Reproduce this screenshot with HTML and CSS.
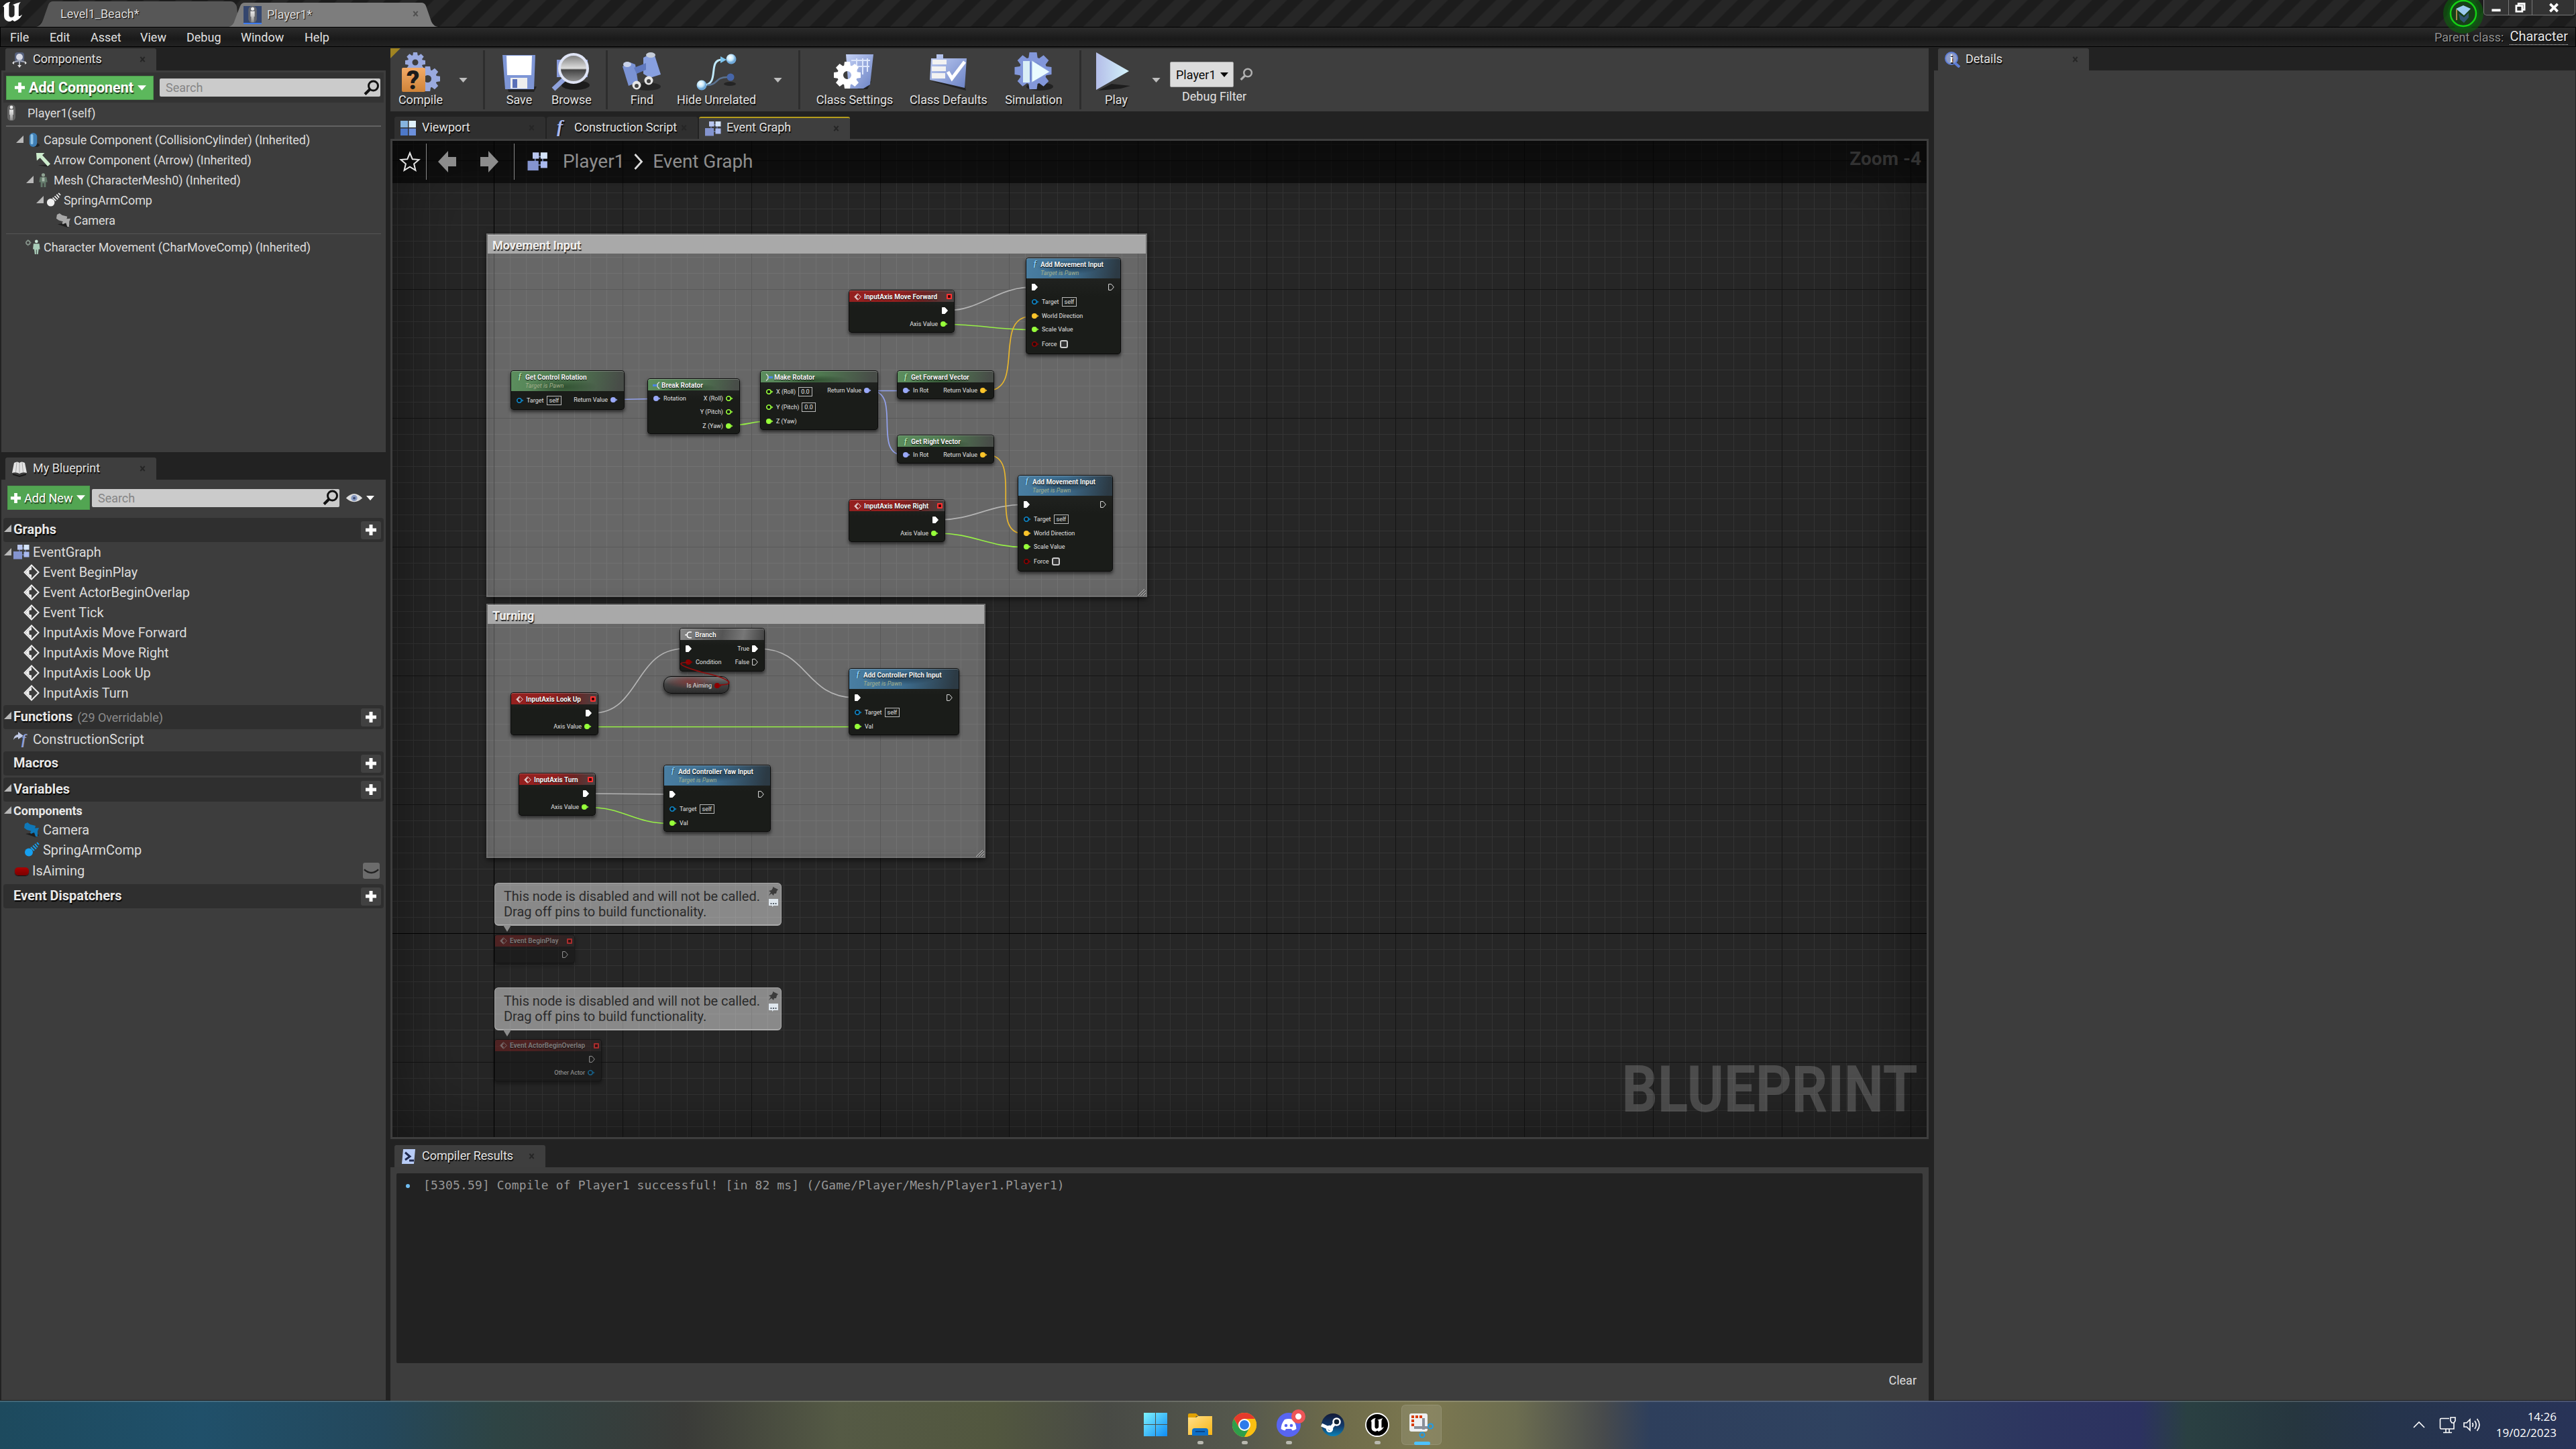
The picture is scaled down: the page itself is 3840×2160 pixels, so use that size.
FILE: index.html
```html
<!DOCTYPE html>
<html lang="en">
<head>
<meta charset="utf-8">
<title>Player1 - Blueprint Editor</title>
<link rel="stylesheet" href="styles.css">
</head>
<body>
<svg class="defs" width="0" height="0" aria-hidden="true">
  <defs>
    <linearGradient id="gBlue" x1="0" y1="0" x2="1" y2="1"><stop offset="0" stop-color="#c3d0f5"/><stop offset="1" stop-color="#6b82c4"/></linearGradient>
    <linearGradient id="gPlay" x1="0" y1="0" x2="1" y2="0"><stop offset="0" stop-color="#b4bde8"/><stop offset="1" stop-color="#d3f3fb"/></linearGradient>
    <linearGradient id="gOrange" x1="0" y1="0" x2="0" y2="1"><stop offset="0" stop-color="#f3ab68"/><stop offset="1" stop-color="#cf8338"/></linearGradient>
    <linearGradient id="gGlass" x1="0" y1="0" x2="0" y2="1"><stop offset="0" stop-color="#777"/><stop offset=".5" stop-color="#ddd"/><stop offset=".55" stop-color="#444"/><stop offset="1" stop-color="#999"/></linearGradient>
    <linearGradient id="gWin" x1="0" y1="0" x2="1" y2="1"><stop offset="0" stop-color="#7df3ff"/><stop offset="1" stop-color="#0f8cf5"/></linearGradient>
    <linearGradient id="gFold" x1="0" y1="0" x2="1" y2="1"><stop offset="0" stop-color="#ffe08a"/><stop offset="1" stop-color="#f9b516"/></linearGradient>
    <linearGradient id="gSteam" x1="0" y1="0" x2="0" y2="1"><stop offset="0" stop-color="#131a38"/><stop offset=".55" stop-color="#123a6b"/><stop offset="1" stop-color="#0a83b8"/></linearGradient>
    <radialGradient id="gOrb" cx=".4" cy=".35"><stop offset="0" stop-color="#fff"/><stop offset=".6" stop-color="#c8eafb"/><stop offset="1" stop-color="#6fa8d8"/></radialGradient>
    <linearGradient id="gMan" x1="0" y1="0" x2="0" y2="1"><stop offset="0" stop-color="#e8e8e8"/><stop offset=".5" stop-color="#c2c2c2"/><stop offset="1" stop-color="#8d8d8d"/></linearGradient>
  </defs>
  <symbol id="ue" viewBox="0 0 28 28"><path d="M0 7C4 1 8 0 11 0c-2 2-2 4-2 7v11c0 3 2 4 4 4s4-2 4-4V7c0-2-1-3-3-3 3-1 8-3 12-4-2 2-3 4-3 7v12c0 2 1 2 5-1-2 5-6 8-11 10l-3-2c-1 1-3 2-4 2-4 0-8-3-8-8V9c0-3-1-3-2-2z" fill="#fff"/></symbol>
  <symbol id="x" viewBox="0 0 10 10"><path d="M1.500 1L8.500 9M8.500 1L1.500 9" stroke="#262626" stroke-width="2.400"/></symbol>
  <symbol id="tri" viewBox="0 0 12 12"><path d="M12 0V12H0z" fill="#b8b8b8"/></symbol>
  <symbol id="down" viewBox="0 0 14 8"><path d="M0 0H14L7 8z" fill="currentColor"/></symbol>
  <symbol id="plus" viewBox="0 0 18 18"><path d="M6.500 1h5v5.500H17v5h-5.500V17h-5v-5.500H1v-5h5.500z" fill="#fff"/></symbol>
  <symbol id="mag" viewBox="0 0 24 24"><circle cx="14.500" cy="9" r="7" fill="none" stroke="currentColor" stroke-width="3"/><path d="M9.500 14L2 21.500" stroke="currentColor" stroke-width="4"/></symbol>
  <symbol id="man" viewBox="0 0 24 24"><rect x="6" y="0" width="12" height="24" rx="5.500" fill="#6c6c6c" opacity=".85"/><circle cx="12" cy="4" r="2.400" fill="#eee"/><path d="M9 7.500h6V15h-1v8h-4v-8H9z" fill="url(#gMan)"/></symbol>
  <symbol id="i-comp" viewBox="0 0 24 24"><rect x="5" y="1" width="14" height="15" rx="4" fill="#56617d"/><circle cx="12" cy="8" r="5" fill="#d7d9e4"/><path d="M12 13v9M3 16l9-3 9 3" stroke="#aeb2bd" stroke-width="1.800" fill="none"/><path d="M12 24l-3-4h6zM1 17l3-3v5zM23 17l-3-3v5z" fill="#e2e2e2"/></symbol>
  <symbol id="i-capsule" viewBox="0 0 24 24"><ellipse cx="16" cy="20" rx="6" ry="3" fill="#222"/><rect x="6" y="1" width="12" height="22" rx="6" fill="#3f7fb5"/><rect x="8" y="3" width="4" height="16" rx="2" fill="#8fc4e8"/></symbol>
  <symbol id="i-arrow" viewBox="0 0 24 24"><path d="M4 20l16 3 2-4z" fill="#222"/><path d="M1 1h13l-3.500 3.500L23 18l-4 4L7 8.500 2 13z" fill="#cdeccd"/></symbol>
  <symbol id="i-mesh" viewBox="0 0 24 24"><circle cx="12" cy="4" r="2.700" fill="#8fa393"/><path d="M7 7h10l1.500 8H16v8h-3v-6h-2v6H8v-8H5.500z" fill="#63796a"/><path d="M10 8h4v6h-4z" fill="#a5b8a8"/></symbol>
  <symbol id="i-spring" viewBox="0 0 24 24"><circle cx="8" cy="15.500" r="6" fill="currentColor"/><path d="M11 8l5 5M14 5.500l5 5M17 3l4 5M20 1l3 3" stroke="currentColor" stroke-width="1.900"/></symbol>
  <symbol id="i-camera" viewBox="0 0 24 24"><path d="M3 18l15 5 5-3-8-4z" fill="#1d1d1d"/><path d="M2 3l4-2 4 3 8 2-2 9-11-3-4-3z" fill="currentColor"/><path d="M14 10l9-1-2 5 0 8h-3l-2-6-5 2-1-2z" fill="currentColor"/></symbol>
  <symbol id="i-move" viewBox="0 0 24 24"><circle cx="4" cy="5" r="3" fill="none" stroke="#87958c" stroke-width="1.800"/><path d="M4 0v2M4 8v2M-1 5h2M7 5h2" stroke="#87958c"/><circle cx="17" cy="3" r="2.500" fill="#c9e6d7"/><path d="M12.500 6.500h9L22.500 15h-2l-1 8h-2v-7h-1v7h-2l-1-8h-2z" fill="#a9cdb9"/></symbol>
  <symbol id="i-book" viewBox="0 0 24 24"><path d="M2 19l10 3 10-3v2l-10 3-10-3z" fill="#181818"/><path d="M4 3q5-3 8 0 3-3 8 0l3 15q-6-2-11 1-5-3-11-1z" fill="#e4e4e4"/><path d="M12 3v15M8 2.500L6.500 17M16 2.500L17.500 17" stroke="#a9a9a9"/></symbol>
  <symbol id="i-graph" viewBox="0 0 24 24"><path d="M11 6h6M18 8v8M10 16h8M9 8v8" stroke="#6577a8" stroke-width="1.500"/><rect x="6" y="1" width="7.500" height="7.500" fill="#b9c6ef"/><rect x="15.500" y="1" width="8" height="7.500" fill="#d5e4fa"/><rect x="0" y="11" width="13" height="11.500" fill="#8494cf"/><rect x="15.500" y="11.500" width="8" height="8" fill="#a9b9ee"/></symbol>
  <symbol id="i-event" viewBox="0 0 24 24"><path d="M12 1.500L22.500 12 12 22.500 1.500 12z" fill="none" stroke="currentColor" stroke-width="2"/><path d="M12 3v5.500L8.500 9v6l3.500.5V21L3 12z" fill="currentColor"/></symbol>
  <symbol id="i-script" viewBox="0 0 24 24"><path d="M0 13C1 6 5 5 7 5V1l8 6-8 5V9C4 9 2 10 0 13z" fill="#c0c9e4"/><text x="12" y="19" font-family="Liberation Serif, serif" font-style="italic" font-weight="bold" font-size="21" fill="#8fa0d8">f</text></symbol>
  <symbol id="i-func" viewBox="0 0 24 24"><text x="6" y="19" font-family="Liberation Serif, serif" font-style="italic" font-weight="bold" font-size="27" fill="currentColor">f</text></symbol>
  <symbol id="i-view" viewBox="0 0 24 24"><path d="M0 1h11v10H0z" fill="#86b4de"/><path d="M12.500 1H23v10H12.500z" fill="#dff1fb"/><path d="M0 12.500h11V23H0z" fill="#4d78c9"/><path d="M12.500 12.500H23V23H12.500z" fill="#6c90dc"/></symbol>
  <symbol id="i-eye" viewBox="0 0 26 16"><path d="M0 8Q13-6 26 8 13 20 0 8z" fill="#ddd"/><circle cx="13" cy="8" r="5" fill="#8799c0"/><circle cx="13" cy="8" r="2" fill="#3d4a6e"/></symbol>
  <symbol id="i-info" viewBox="0 0 24 24"><path d="M14 15l9 8" stroke="#5f7ed6" stroke-width="4"/><circle cx="11" cy="10" r="9" fill="#8d9bc4" stroke="#5f7ed6" stroke-width="2"/><text x="8.500" y="16" font-family="Liberation Serif, serif" font-weight="bold" font-size="17" fill="#fff">i</text></symbol>
  <symbol id="i-log" viewBox="0 0 24 24"><path d="M4 1h18l-2 22H2z" fill="#b9cdf7"/><path d="M7 6l7 6-7 5" fill="none" stroke="#202a4e" stroke-width="3"/><path d="M13 18h7" stroke="#202a4e" stroke-width="3"/></symbol>
  <symbol id="gear" viewBox="0 0 40 40"><g><path d="M16 0h8l1 7H15z"/><path d="M16 0h8l1 7H15z" transform="rotate(45 20 20)"/><path d="M16 0h8l1 7H15z" transform="rotate(90 20 20)"/><path d="M16 0h8l1 7H15z" transform="rotate(135 20 20)"/><path d="M16 0h8l1 7H15z" transform="rotate(180 20 20)"/><path d="M16 0h8l1 7H15z" transform="rotate(225 20 20)"/><path d="M16 0h8l1 7H15z" transform="rotate(270 20 20)"/><path d="M16 0h8l1 7H15z" transform="rotate(315 20 20)"/></g><circle cx="20" cy="20" r="10.500" fill="none" stroke="currentColor" stroke-width="9"/></symbol>
  <symbol id="exec" viewBox="0 0 9 10"><path d="M.5.500h4L8.500 5l-4 4.500h-4z" fill="#fff" stroke="#fff"/></symbol>
  <symbol id="exec-o" viewBox="0 0 9 10"><path d="M.600.600h4L8.300 5 4.600 9.400h-4z" fill="none" stroke="#e0e0e0" stroke-width="1"/></symbol>
  <symbol id="pin" viewBox="0 0 11 8"><circle cx="4" cy="4" r="4" fill="currentColor"/><path d="M8.200 2.200L10.500 4 8.200 5.800z" fill="currentColor"/></symbol>
  <symbol id="pin-o" viewBox="0 0 11 8"><circle cx="4" cy="4" r="3.200" fill="#111" stroke="currentColor" stroke-width="1.600"/><path d="M8.200 2.200L10.500 4 8.200 5.800z" fill="currentColor"/></symbol>
  <symbol id="rot-b" viewBox="0 0 10 10"><path d="M0 3.500h6v3H0z" fill="#4d86e0"/><path d="M9 .5L6.500 3v4L9 9.500" fill="none" stroke="#ddd" stroke-width="1.200"/></symbol>
  <symbol id="rot-m" viewBox="0 0 10 10"><path d="M4 3.500h6v3H4z" fill="#4d86e0"/><path d="M1 .5L3.500 3v4L1 9.500" fill="none" stroke="#ddd" stroke-width="1.200"/></symbol>
  <symbol id="branch" viewBox="0 0 10 10"><path d="M9 1.200H6Q3 1.500 3 5T6 8.800H9M0 5H3" fill="none" stroke="#fff" stroke-width="1.400"/></symbol>
  <symbol id="i-tack" viewBox="0 0 14 14"><path d="M6 0l8 4-2 2-1 4-3 0-1 3-3-3-4 3 3-5-3-2 4-1 2-3z" fill="#3b3b3b"/></symbol>
  <symbol id="i-note" viewBox="0 0 14 12"><path d="M0 0h14v10H7l-2 2V10H0z" fill="#dfe7ee"/><path d="M2.500 6h2v2h-2zM6 6h2v2H6zM9.500 6h2v2h-2z" fill="#56606a"/></symbol>
</svg>

<header class="titlebar">
  <svg class="logo"><use href="#ue"/></svg>
  <div class="wtab wtab-a"><svg viewBox="0 0 300 38" preserveAspectRatio="none"><path d="M0 38Q7 36 10 28L18 5Q20 0 25 0H288Q294 0 297 8L300 38z" fill="#575757"/></svg><span>Level1_Beach*</span></div>
  <div class="wtab wtab-b"><svg class="shape" viewBox="0 0 312 36" preserveAspectRatio="none"><path d="M0 36Q7 34 9 26L17 5Q19 0 24 0H287Q292 0 294 5L302 28Q305 35 312 36z" fill="#7d7d7d"/></svg><i class="thumb"><svg><use href="#man"/></svg></i><span>Player1*</span><svg class="close"><use href="#x"/></svg></div>
  <div class="source"><svg viewBox="0 0 62 62"><circle cx="31" cy="31" r="30" fill="#0a6a0a" opacity=".55"/><circle cx="31" cy="31" r="24" fill="#0c5f12" opacity=".6"/><circle cx="31" cy="31" r="19" fill="#173f17" stroke="#15d015" stroke-width="2.500"/><path d="M20 24l11-5 11 5-10 10z" fill="#9cc9ee"/><path d="M24 31l8 6 7-7v7l-7 8-6-5z" fill="#31536e"/><path d="M21 25v16" stroke="#a8854a" stroke-width="2"/></svg></div>
  <div class="winbtns">
    <b class="min"><svg viewBox="0 0 16 16"><path d="M1 10h14v4H1z" fill="#fff"/></svg></b>
    <b class="max"><svg viewBox="0 0 16 16"><path d="M5 4V1.500h9.500V11H12M1.500 5h9.500v9H1.500z" fill="none" stroke="#fff" stroke-width="3"/></svg></b>
    <b class="cls"><svg viewBox="0 0 16 16"><path d="M2 2l12 12M14 2L2 14" stroke="#fff" stroke-width="4"/></svg></b>
  </div>
</header>
<nav class="menubar">
  <span class="m1">File</span><span class="m2">Edit</span><span class="m3">Asset</span><span class="m4">View</span><span class="m5">Debug</span><span class="m6">Window</span><span class="m7">Help</span>
  <div class="parent"><span>Parent class:</span><a>Character</a></div>
</nav>

<main class="main">
  <aside class="left">
    <div class="tab"><svg><use href="#i-comp"/></svg><span>Components</span><svg class="close"><use href="#x"/></svg></div>
    <section class="panel comps">
      <div class="bar">
        <button class="add"><svg><use href="#plus"/></svg>Add Component<svg class="dn"><use href="#down"/></svg></button>
        <div class="search"><span>Search</span><svg><use href="#mag"/></svg></div>
      </div>
      <div class="self"><svg><use href="#man"/></svg>Player1(self)</div>
      <hr>
      <div class="row"><svg class="tri"><use href="#tri"/></svg><svg class="ic"><use href="#i-capsule"/></svg>Capsule Component (CollisionCylinder) (Inherited)</div>
      <div class="row d1"><i class="tri"></i><svg class="ic"><use href="#i-arrow"/></svg>Arrow Component (Arrow) (Inherited)</div>
      <div class="row d1"><svg class="tri"><use href="#tri"/></svg><svg class="ic"><use href="#i-mesh"/></svg>Mesh (CharacterMesh0) (Inherited)</div>
      <div class="row d2"><svg class="tri"><use href="#tri"/></svg><svg class="ic white"><use href="#i-spring"/></svg>SpringArmComp</div>
      <div class="row d3"><i class="tri"></i><svg class="ic grey"><use href="#i-camera"/></svg>Camera</div>
      <hr class="thin">
      <div class="row last"><i class="tri"></i><svg class="ic"><use href="#i-move"/></svg>Character Movement (CharMoveComp) (Inherited)</div>
    </section>
    <div class="tab second"><svg><use href="#i-book"/></svg><span>My Blueprint</span><svg class="close"><use href="#x"/></svg></div>
    <section class="panel bp">
      <div class="bar2">
        <button class="add new"><svg><use href="#plus"/></svg>Add New<svg class="dn"><use href="#down"/></svg></button>
        <div class="search"><span>Search</span><svg><use href="#mag"/></svg></div>
        <svg class="eye"><use href="#i-eye"/></svg><svg class="dn"><use href="#down"/></svg>
      </div>
      <h3><svg class="tri"><use href="#tri"/></svg>Graphs<b><svg><use href="#plus"/></svg></b></h3>
      <div class="brow"><svg class="tri"><use href="#tri"/></svg><svg class="ic"><use href="#i-graph"/></svg>EventGraph</div>
      <div class="brow in"><svg class="ic white"><use href="#i-event"/></svg>Event BeginPlay</div>
      <div class="brow in"><svg class="ic white"><use href="#i-event"/></svg>Event ActorBeginOverlap</div>
      <div class="brow in"><svg class="ic white"><use href="#i-event"/></svg>Event Tick</div>
      <div class="brow in"><svg class="ic white"><use href="#i-event"/></svg>InputAxis Move Forward</div>
      <div class="brow in"><svg class="ic white"><use href="#i-event"/></svg>InputAxis Move Right</div>
      <div class="brow in"><svg class="ic white"><use href="#i-event"/></svg>InputAxis Look Up</div>
      <div class="brow in"><svg class="ic white"><use href="#i-event"/></svg>InputAxis Turn</div>
      <h3 class="gap"><svg class="tri"><use href="#tri"/></svg>Functions<small>(29 Overridable)</small><b><svg><use href="#plus"/></svg></b></h3>
      <div class="brow"><i class="tri"></i><svg class="ic"><use href="#i-script"/></svg>ConstructionScript</div>
      <h3 class="gap"><i class="tri"></i>Macros<b><svg><use href="#plus"/></svg></b></h3>
      <h3 class="gap"><svg class="tri"><use href="#tri"/></svg>Variables<b><svg><use href="#plus"/></svg></b></h3>
      <h4><svg class="tri"><use href="#tri"/></svg>Components</h4>
      <div class="brow in"><svg class="ic cam"><use href="#i-camera"/></svg>Camera</div>
      <div class="brow in"><svg class="ic spr"><use href="#i-spring"/></svg>SpringArmComp</div>
      <div class="brow aim"><i class="tri"></i><i class="pill"></i>IsAiming<b class="lid"><svg viewBox="0 0 26 24"><path d="M2 10Q13 20 24 10" fill="none" stroke="#222" stroke-width="2.500"/></svg></b></div>
      <h3 class="gap"><i class="tri"></i>Event Dispatchers<b><svg><use href="#plus"/></svg></b></h3>
    </section>
  </aside>

  <section class="center">
    <div class="toolbar">
      <div class="tb w90"><svg viewBox="0 0 60 60"><use href="#gear" x="7" y="1" width="30" height="30" class="gearb"/><use href="#gear" x="22" y="22" width="37" height="37" class="gearb"/><rect x="2" y="24" width="35" height="36" rx="2" fill="url(#gOrange)"/><text x="9" y="56" font-family="Roboto, sans-serif" font-weight="900" font-size="38" fill="#1b1b1b">?</text></svg>Compile</div>
      <div class="drop w36"><svg><use href="#down"/></svg></div>
      <i class="sep"></i>
      <div class="tb w78"><svg viewBox="0 0 60 60"><path d="M12 52h44l-4 8H14z" fill="#222"/><path d="M5 5h49l-2 51H9z" fill="#7e96d6"/><path d="M11 6h38l-1 29H12z" fill="#fff"/><path d="M17 39h25v16H17z" fill="#eee"/><path d="M20 41h7v13h-7z" fill="#5a70b8"/></svg>Save</div>
      <div class="tb w78"><svg viewBox="0 0 60 60"><ellipse cx="36" cy="50" rx="21" ry="7" fill="#1c1c1c"/><path d="M8 12h46v26H8z" fill="#8799d8"/><path d="M19 41L3 56" stroke="#8fa2dc" stroke-width="7"/><circle cx="33" cy="25" r="21" fill="url(#gGlass)" stroke="#dfe4f5" stroke-width="4"/></svg>Browse</div>
      <i class="sep"></i>
      <div class="tb w78"><svg viewBox="0 0 60 60"><ellipse cx="38" cy="52" rx="20" ry="6" fill="#262626"/><path d="M1 22l11-6 8 3 4 26-14 6z" fill="#7b93d4"/><path d="M32 9l11-6 6 3 9 28-16 5-10-6z" fill="#88a0e0"/><path d="M18 24l18-7v10l-14 6z" fill="#5f78be"/><ellipse cx="8" cy="19" rx="6" ry="4" fill="#c9d2ea"/><ellipse cx="43" cy="5" rx="7" ry="4" fill="#c5ccd8"/><circle cx="22" cy="50" r="6.500" fill="#e6e6e6"/><circle cx="40" cy="43" r="6.500" fill="#e6e6e6"/><circle cx="22" cy="51" r="3" fill="#444"/><circle cx="40" cy="44" r="3" fill="#444"/></svg>Find</div>
      <div class="tb w144"><svg viewBox="0 0 60 60"><path d="M10 50C36 50 16 12 38 12" fill="none" stroke="#bfe9fb" stroke-width="3"/><path d="M36 7l9 5-9 5z" fill="#7cc4ee"/><path d="M16 50C32 50 28 38 46 38" fill="none" stroke="#5b7391" stroke-width="2.500"/><ellipse cx="50" cy="48" rx="9" ry="3" fill="#242424"/><circle cx="52" cy="11" r="7.500" fill="url(#gOrb)"/><circle cx="8" cy="50" r="7.500" fill="url(#gOrb)"/><circle cx="51" cy="38" r="5.500" fill="#4766a8"/></svg>Hide Unrelated</div>
      <div class="drop w38"><svg><use href="#down"/></svg></div>
      <i class="sep"></i>
      <div class="tb w138 nudge"><svg viewBox="0 0 60 60"><path d="M30 50l26-6-6 12H36z" fill="#222"/><path d="M18 4h41l-5 45-10 6H22z" fill="url(#gBlue)"/><path d="M26 13h28M26 22h27M34 10v28M43 10v24M50 10v20" stroke="#dde6fb" stroke-width="2"/><use href="#gear" x="0" y="14" width="40" height="42" class="gearw"/></svg>Class Settings</div>
      <div class="tb w142"><svg viewBox="0 0 60 60"><path d="M4 44l52 14-2-8z" fill="#222"/><path d="M4 10h8V4h10v6h35l-3 44L2 42z" fill="url(#gBlue)"/><path d="M6 12h21v7H6zM5 22h21v7H5zM5 32h20v8H5z" fill="#f2f2f2"/><path d="M29 30l6 10L54 15" fill="none" stroke="#fff" stroke-width="5"/></svg>Class Defaults</div>
      <div class="tb w112 nudge"><svg viewBox="0 0 60 60"><ellipse cx="40" cy="52" rx="20" ry="6" fill="#222"/><use href="#gear" x="1" y="1" width="58" height="55" class="geard"/><circle cx="30" cy="29" r="14" fill="#6f86ce"/><path d="M15 14h10v32H15z" fill="#d9eef6"/><path d="M28 13l27 17-27 16z" fill="#e9fbff" stroke="#8ba4dd"/></svg>Simulation</div>
      <i class="sep"></i>
      <div class="tb w80 play"><svg viewBox="0 0 60 60"><path d="M8 58l20-10 28 3-14 4z" fill="#1d1d1d"/><path d="M5 1l49 28L5 57z" fill="url(#gPlay)"/></svg>Play</div>
      <div class="drop w38"><svg><use href="#down"/></svg></div>
      <div class="filter"><div class="frow"><div class="select">Player1<svg><use href="#down"/></svg></div><svg class="fm"><use href="#mag"/></svg></div><span>Debug Filter</span></div>
    </div>
    <div class="tabs">
      <div class="tab dim"><svg><use href="#i-view"/></svg><span>Viewport</span><svg class="close"><use href="#x"/></svg></div>
      <div class="tab dim long"><svg class="fn"><use href="#i-func"/></svg><span>Construction Script</span><svg class="close"><use href="#x"/></svg></div>
      <div class="tab active"><svg><use href="#i-graph"/></svg><span>Event Graph</span><svg class="close"><use href="#x"/></svg></div>
    </div>
    <div class="graph">
      <div class="grid"></div>
      <div class="canvas">
        <div class="comment c-move"><h5>Movement Input</h5><svg class="grip" viewBox="0 0 12 10"><path d="M0 10L10 0M4 10L12 2M8 10l4-4" stroke="#bbb"/></svg></div>
        <div class="comment c-turn"><h5>Turning</h5><svg class="grip" viewBox="0 0 12 10"><path d="M0 10L10 0M4 10L12 2M8 10l4-4" stroke="#bbb"/></svg></div>
        <svg class="wires" viewBox="0 0 2900 1700">
          <g stroke="#b4b4b4">
            <path d="M1415 462.500C1460 462.500 1488 428 1538 428"/>
            <path d="M1400 775C1450 775 1475 752 1526 752"/>
            <path d="M883 1063C955 1063 945 967 1020 967"/>
            <path d="M1131 967C1205 967 1200 1040 1275 1040"/>
            <path d="M879 1183L998 1184"/>
          </g>
          <g stroke="#97f046">
            <path d="M1413 483.500C1460 484 1490 491.500 1538 491.500"/>
            <path d="M1399 795C1450 795 1475 815.500 1526 815.500"/>
            <path d="M1092 634C1110 634 1125 628 1141 628"/>
            <path d="M882 1083.500H1275"/>
            <path d="M877 1203.500C930 1203.500 945 1227.500 998 1227.500"/>
          </g>
          <g stroke="#e8b62e">
            <path d="M1471 582.500C1530 582.500 1478 471.500 1538 471.500"/>
            <path d="M1471 678C1528 678 1471 795.500 1526 795.500"/>
          </g>
          <g stroke="#93a2ee">
            <path d="M1298 582.500H1346"/><path d="M1298 582.500C1345 582.500 1300 678 1346 678"/><path d="M921 595.500L973 594.500"/>
          </g>
        </svg>

        <div class="node n-fwd red"><header><svg><use href="#i-event"/></svg>InputAxis Move Forward<i></i></header><div class="pins"><div></div><div class="r"><p class="p26"><svg class="e"><use href="#exec"/></svg></p><p class="p15">Axis Value<svg class="g"><use href="#pin"/></svg></p></div></div></div>
        <div class="node n-add1 blue tall"><header><svg><use href="#i-func"/></svg><span>Add Movement Input<em>Target is Pawn</em></span></header><div class="pins"><div><p class="p26"><svg class="e"><use href="#exec"/></svg></p><p class="p20"><svg class="c"><use href="#pin-o"/></svg>Target<u>self</u></p><p class="p21"><svg class="y"><use href="#pin"/></svg>World Direction</p><p class="p20"><svg class="g"><use href="#pin"/></svg>Scale Value</p><p class="p24"><svg class="d"><use href="#pin-o"/></svg>Force<s></s></p></div><div class="r"><p class="p26"><svg class="e"><use href="#exec-o"/></svg></p></div></div></div>
        <div class="node n-gfv green"><header><svg><use href="#i-func"/></svg>Get Forward Vector</header><div class="pins"><div><p class="p24"><svg class="b"><use href="#pin"/></svg>In Rot</p></div><div class="r"><p class="p24">Return Value<svg class="y"><use href="#pin"/></svg></p></div></div></div>
        <div class="node n-grv green"><header><svg><use href="#i-func"/></svg>Get Right Vector</header><div class="pins"><div><p class="p24"><svg class="b"><use href="#pin"/></svg>In Rot</p></div><div class="r"><p class="p24">Return Value<svg class="y"><use href="#pin"/></svg></p></div></div></div>
        <div class="node n-add2 blue tall"><header><svg><use href="#i-func"/></svg><span>Add Movement Input<em>Target is Pawn</em></span></header><div class="pins"><div><p class="p26"><svg class="e"><use href="#exec"/></svg></p><p class="p20"><svg class="c"><use href="#pin-o"/></svg>Target<u>self</u></p><p class="p21"><svg class="y"><use href="#pin"/></svg>World Direction</p><p class="p20"><svg class="g"><use href="#pin"/></svg>Scale Value</p><p class="p24"><svg class="d"><use href="#pin-o"/></svg>Force<s></s></p></div><div class="r"><p class="p26"><svg class="e"><use href="#exec-o"/></svg></p></div></div></div>
        <div class="node n-right red"><header><svg><use href="#i-event"/></svg>InputAxis Move Right<i></i></header><div class="pins"><div></div><div class="r"><p class="p26"><svg class="e"><use href="#exec"/></svg></p><p class="p15">Axis Value<svg class="g"><use href="#pin"/></svg></p></div></div></div>
        <div class="node n-gcr green tall"><header><svg><use href="#i-func"/></svg><span>Get Control Rotation<em>Target is Pawn</em></span></header><div class="pins"><div><p class="p27"><svg class="c"><use href="#pin-o"/></svg>Target<u>self</u></p></div><div class="r"><p class="p25">Return Value<svg class="b"><use href="#pin"/></svg></p></div></div></div>
        <div class="node n-brk green"><header><svg><use href="#rot-b"/></svg>Break Rotator</header><div class="pins"><div><p class="p24"><svg class="b"><use href="#pin"/></svg>Rotation</p></div><div class="r"><p class="p24">X (Roll)<svg class="g"><use href="#pin-o"/></svg></p><p class="p15">Y (Pitch)<svg class="g"><use href="#pin-o"/></svg></p><p class="p25">Z (Yaw)<svg class="g"><use href="#pin"/></svg></p></div></div></div>
        <div class="node n-mk green"><header><svg><use href="#rot-m"/></svg>Make Rotator</header><div class="pins"><div><p class="p27"><svg class="g"><use href="#pin-o"/></svg>X (Roll)<u>0.0</u></p><p class="p20"><svg class="g"><use href="#pin-o"/></svg>Y (Pitch)<u>0.0</u></p><p class="p23"><svg class="g"><use href="#pin"/></svg>Z (Yaw)</p></div><div class="r"><p class="p24">Return Value<svg class="b"><use href="#pin"/></svg></p></div></div></div>

        <div class="node n-br grey"><header><svg><use href="#branch"/></svg>Branch</header><div class="pins"><div><p class="p26"><svg class="e"><use href="#exec"/></svg></p><p class="p15"><svg class="d"><use href="#pin"/></svg>Condition</p></div><div class="r"><p class="p26">True<svg class="e"><use href="#exec"/></svg></p><p class="p15">False<svg class="e"><use href="#exec-o"/></svg></p></div></div></div>
        <div class="node n-aim">Is Aiming<svg class="d"><use href="#pin"/></svg></div>
        <div class="node n-look red"><header><svg><use href="#i-event"/></svg>InputAxis Look Up<i></i></header><div class="pins"><div></div><div class="r"><p class="p26"><svg class="e"><use href="#exec"/></svg></p><p class="p15">Axis Value<svg class="g"><use href="#pin"/></svg></p></div></div></div>
        <div class="node n-pitch blue tall"><header><svg><use href="#i-func"/></svg><span>Add Controller Pitch Input<em>Target is Pawn</em></span></header><div class="pins"><div><p class="p26"><svg class="e"><use href="#exec"/></svg></p><p class="p20"><svg class="c"><use href="#pin-o"/></svg>Target<u>self</u></p><p class="p23"><svg class="g"><use href="#pin"/></svg>Val</p></div><div class="r"><p class="p26"><svg class="e"><use href="#exec-o"/></svg></p></div></div></div>
        <div class="node n-turn red"><header><svg><use href="#i-event"/></svg>InputAxis Turn<i></i></header><div class="pins"><div></div><div class="r"><p class="p26"><svg class="e"><use href="#exec"/></svg></p><p class="p15">Axis Value<svg class="g"><use href="#pin"/></svg></p></div></div></div>
        <div class="node n-yaw blue tall"><header><svg><use href="#i-func"/></svg><span>Add Controller Yaw Input<em>Target is Pawn</em></span></header><div class="pins"><div><p class="p26"><svg class="e"><use href="#exec"/></svg></p><p class="p20"><svg class="c"><use href="#pin-o"/></svg>Target<u>self</u></p><p class="p23"><svg class="g"><use href="#pin"/></svg>Val</p></div><div class="r"><p class="p26"><svg class="e"><use href="#exec-o"/></svg></p></div></div></div>
        <svg class="wires over" viewBox="0 0 2900 1700"><path d="M1072 1021C1100 1021 1086 1011 1050 1003C1020 995 1002 987 1026 987.500" stroke="#8c0d0d"/></svg>

        <div class="bubble b1"><p>This node is disabled and will not be called.<br>Drag off pins to build functionality.</p><div><svg><use href="#i-tack"/></svg><svg><use href="#i-note"/></svg></div></div>
        <div class="node n-begin red off"><header><svg><use href="#i-event"/></svg>Event BeginPlay<i></i></header><div class="pins"><div></div><div class="r"><p class="p26"><svg class="e"><use href="#exec-o"/></svg></p></div></div></div>
        <div class="bubble b2"><p>This node is disabled and will not be called.<br>Drag off pins to build functionality.</p><div><svg><use href="#i-tack"/></svg><svg><use href="#i-note"/></svg></div></div>
        <div class="node n-over red off"><header><svg><use href="#i-event"/></svg>Event ActorBeginOverlap<i></i></header><div class="pins"><div></div><div class="r"><p class="p26"><svg class="e"><use href="#exec-o"/></svg></p><p class="p15">Other Actor<svg class="c"><use href="#pin-o"/></svg></p></div></div></div>
      </div>
      <div class="crumbs">
        <svg class="star" viewBox="0 0 30 30"><path d="M15 2l3.800 9.300 9.700.8-7.400 6.200 2.300 9.500L15 22.700 6.600 27.800l2.300-9.500L1.500 12.100l9.700-.8z" fill="none" stroke="#e6e6e6" stroke-width="2"/></svg>
        <i class="bar1"></i>
        <svg class="nav" viewBox="0 0 27 34"><path d="M0 17L15 1v9h12v14H15v9z" fill="#8c8c8c"/></svg>
        <svg class="nav fw" viewBox="0 0 27 34"><path d="M27 17L12 1v9H0v14h12v9z" fill="#8c8c8c"/></svg>
        <i class="bar1 two"></i>
        <svg class="gi"><use href="#i-graph"/></svg>
        <span>Player1</span>
        <svg class="chev" viewBox="0 0 14 24"><path d="M1.500 1L11.500 12 1.500 23" fill="none" stroke="#ddd" stroke-width="2.800"/></svg>
        <span>Event Graph</span>
        <strong>Zoom -4</strong>
      </div>
      <div class="mark">BLUEPRINT</div>
    </div>
    <div class="tab results"><svg><use href="#i-log"/></svg><span>Compiler Results</span><svg class="close"><use href="#x"/></svg></div>
    <div class="panel output">
      <div class="log"><i></i><code>[5305.59] Compile of Player1 successful! [in 82 ms] (/Game/Player/Mesh/Player1.Player1)</code></div>
      <div class="clear">Clear</div>
    </div>
  </section>

  <aside class="right">
    <div class="tab"><svg><use href="#i-info"/></svg><span>Details</span><svg class="close"><use href="#x"/></svg></div>
    <section class="panel details"></section>
  </aside>
</main>

<footer class="taskbar">
  <div class="apps">
    <div class="app"><svg viewBox="0 0 36 36"><path d="M0 0h17v17H0zM18 0h17v17H18zM0 18h17v17H0zM18 18h17v17H18z" fill="url(#gWin)"/></svg></div>
    <div class="app run"><svg viewBox="0 0 36 36"><path d="M0 3q0-2 2-2h10l4 4h-4l-2 6H0z" fill="#e0a100"/><path d="M0 7h12l3-2h21v28H0z" fill="url(#gFold)"/><path d="M6 34v-7q0-4 4-4h16q4 0 4 4v7z" fill="#0f6fc6"/><path d="M11 28h14" stroke="#0a4486" stroke-width="2"/></svg></div>
    <div class="app run"><svg viewBox="0 0 36 36"><circle cx="18" cy="18" r="18" fill="#fbbf12"/><path d="M18 9h15.600A18 18 0 0 0 2.400 9l8 13z" fill="#e53a2c"/><path d="M2.400 9A18 18 0 0 0 18 36l7.800-13.500-15.600 0z" fill="#2f9e4a"/><path d="M18 36A18 18 0 0 0 33.600 9H18l7.800 13.500z" fill="#fbbf12"/><circle cx="18" cy="18" r="9" fill="#fff"/><circle cx="18" cy="18" r="7" fill="#2f7bea"/></svg></div>
    <div class="app run"><svg viewBox="0 0 36 36"><circle cx="18" cy="18" r="18" fill="#5865f2"/><path d="M12 10q6-2 12 0 5 6 5.500 14-3 2-6 2.500l-1.500-2.500h-8L12.500 26.500q-3-.5-6-2.500Q7 16 12 10z" fill="#fff"/><circle cx="14" cy="19" r="2.300" fill="#5865f2"/><circle cx="22" cy="19" r="2.300" fill="#5865f2"/></svg><b class="badge"></b></div>
    <div class="app"><svg viewBox="0 0 36 36"><circle cx="18" cy="18" r="17" fill="url(#gSteam)"/><path d="M1 18l13 6 8-10" fill="none" stroke="#fff" stroke-width="5"/><circle cx="23.500" cy="13.500" r="5" fill="#123" stroke="#fff" stroke-width="2.500"/><circle cx="13" cy="24" r="4" fill="none" stroke="#fff" stroke-width="2.500"/></svg></div>
    <div class="app run"><svg viewBox="0 0 36 36"><circle cx="18" cy="18" r="17" fill="#000" stroke="#fff" stroke-width="1.800"/><use href="#ue" x="8" y="8" width="20" height="20"/></svg></div>
    <div class="app sel"><svg viewBox="0 0 36 36"><rect width="27" height="27" rx="3" fill="#eef0f2"/><path d="M5 3v17M3 5h17" stroke="#d83b01" stroke-width="4" stroke-dasharray="4 2"/><path d="M21 7v17M7 21h20" stroke="#8a9099" stroke-width="4"/><circle cx="31.500" cy="19" r="3.500" fill="none" stroke="#1f9ce8" stroke-width="2"/><circle cx="19" cy="32" r="3.500" fill="none" stroke="#1f9ce8" stroke-width="2"/></svg></div>
  </div>
  <div class="tray">
    <svg class="up" viewBox="0 0 18 10"><path d="M1 9l8-8 8 8" fill="none" stroke="#fff" stroke-width="1.600"/></svg>
    <svg class="net" viewBox="0 0 25 25"><path d="M15 2.500H3q-1.500 0-1.500 1.500v12q0 2 1.500 2h19V9M6 23.500h13M10 18v5M15 18v5" fill="none" stroke="#fff" stroke-width="1.600"/><path d="M17 1h7v5l-2 3h-3l-2-3z" fill="none" stroke="#fff" stroke-width="1.600"/></svg>
    <svg class="vol" viewBox="0 0 25 22"><path d="M1 8h4l5-5v16l-5-5H1z" fill="none" stroke="#fff" stroke-width="1.600"/><path d="M13.500 8q2 3 0 6M17 5q4.500 6 0 12M20.500 2q7 9 0 18" fill="none" stroke="#fff" stroke-width="1.600"/></svg>
    <div class="clock">14:26<br>19/02/2023</div>
  </div>
</footer>
</body>
</html>
```

FILE: styles.css
```css
* { box-sizing: border-box; margin: 0; padding: 0; }
body { width: 3840px; height: 2160px; overflow: hidden; background: #222; color: #dcdcdc; font: 18px Roboto, sans-serif; display: flex; flex-direction: column; }
.defs { position: absolute; }
svg { display: block; flex: none; overflow: visible; }
i, em { font-style: normal; }
button { border: 0; font: inherit; color: #fff; }

/* title bar */
.titlebar { height: 41px; border-bottom: 1px solid #000; display: flex; align-items: flex-end; position: relative; background: repeating-linear-gradient(135deg, #1c1c1c 0 15px, #262626 17px 32px, #1c1c1c 33.940px); }
.logo { width: 29px; height: 29px; margin: 0 0 8px 4px; }
.wtab { position: relative; height: 38px; width: 302px; margin-left: 21px; display: flex; align-items: center; padding-left: 36px; text-shadow: 1px 1px 1px #000; }
.wtab > svg:first-child { position: absolute; inset: 0; width: 100%; height: 100%; }
.wtab span { position: relative; }
.wtab-a span { padding-bottom: 2px; }
.wtab-b { width: 312px; height: 36px; margin-left: -15px; padding-left: 22px; }
.wtab-b span { padding-bottom: 1px; }
.thumb { position: relative; width: 27px; height: 27px; background: #34466e; border-bottom: 2px solid #3d7bf0; margin-right: 8px; }
.thumb svg { width: 27px; height: 25px; }
.wtab .close { position: absolute; left: 274px; top: 12px; width: 9px; height: 9px; opacity: .5; }
.source { position: absolute; left: 3641px; top: -11px; width: 62px; height: 62px; z-index: 2; }
.winbtns { position: absolute; left: 3702px; top: 0; z-index: 3; display: flex; height: 23px; border: 1px solid #777; border-top: 0; border-radius: 0 0 5px 5px; background: #333; }
.winbtns b { display: flex; align-items: center; justify-content: center; border-right: 1px solid #777; }
.winbtns b:last-child { border: 0; }
.winbtns svg { width: 16px; height: 15px; }
.min { width: 37px; } .max { width: 35px; } .cls { width: 63px; }

.menubar { height: 29px; border: 1px solid #000; border-width: 0 1px 1px; background: linear-gradient(#2b2b2b, #1a1a1a 60%, #222); display: flex; align-items: center; line-height: 29px; color: #e0e0e0; padding-left: 14px; }
.m1 { width: 59px; } .m2 { width: 61px; } .m3 { width: 74px; } .m4 { width: 69px; } .m5 { width: 81px; } .m6 { width: 95px; }
.parent { margin-left: auto; padding-right: 11px; display: flex; gap: 9px; align-items: center; color: #8f8f8f; text-shadow: 1px 1px 0 #000; }
.parent a { font-size: 20px; color: #e6e6e6; line-height: 23px; border-bottom: 1px dotted #ddd; }

.main { height: 2018px; padding: 2px 1px 0 2px; display: flex; }
.left { width: 573px; }
.center { width: 2293px; margin: 0 8px 0 7px; }
.right { flex: 1; }
.tab { height: 33px; width: 225px; margin-left: 6px; background: #3e3e3e; border-radius: 3px 3px 0 0; display: flex; align-items: center; padding: 0 16px 0 9px; color: #e2e2e2; text-shadow: 1px 2px 1px #000; }
.tab > svg:first-child { width: 24px; height: 24px; margin-right: 8px; }
.tab span { flex: 1; overflow: hidden; white-space: nowrap; line-height: 28px; padding-bottom: 2px; }
.tab .close { width: 9px; height: 9px; }
.panel { background: #3d3d3d; }

/* components panel */
.comps { height: 569px; padding: 3px 3px 0; }
.bar { height: 45px; background: #333; display: flex; align-items: center; padding: 0 5px 0 4px; }
.add { width: 220px; height: 36px; background: #5cb85c; border: 1px solid #4c9a4c; display: flex; align-items: center; font-weight: bold; font-size: 21.500px; text-shadow: 1px 2px 1px #1c3c1c; padding-left: 11px; white-space: nowrap; }
.add svg { width: 17px; height: 17px; margin-right: 5px; }
.add .dn { width: 13px; height: 8px; margin: 0 0 0 6px; }
.search { height: 27px; background: #cbcbcb; border-radius: 2px; flex: 1; margin-left: 9px; display: flex; align-items: center; justify-content: space-between; padding: 0 1px 0 9px; color: #858585; }
.search svg { width: 24px; height: 24px; color: #111; }
.self { height: 34px; display: flex; align-items: center; padding: 0 0 4px 0; gap: 12px; }
.self svg { width: 24px; height: 24px; }
hr { border: 0; height: 2px; background: #626262; margin: 0 4px; }
hr.thin { height: 1px; background: #555; margin-top: 5px; }
.row { height: 30px; display: flex; align-items: center; padding-left: 19px; white-space: nowrap; letter-spacing: -.070px; }
hr + .row { margin-top: 4px; }
.tri { width: 11px; height: 11px; flex: none; margin-right: 3px; }
svg.tri { margin-bottom: 2px; }
.ic { width: 23px; height: 23px; margin-right: 4px; }
.d1 { padding-left: 34px; } .d2 { padding-left: 49px; } .d3 { padding-left: 64px; }
.white { color: #efefef; } .grey { color: #a8a8a8; }

/* my blueprint panel */
.second { margin-top: 8px; }
.bp { height: 1372px; padding: 9px 3px 0; font-size: 20px; letter-spacing: -.030px; }
.bar2 { height: 36px; display: flex; align-items: center; margin-bottom: 12px; padding-left: 6px; font-size: 18px; }
.new { width: 123px; background: #52a552; font-weight: 400; font-size: 18px; padding-left: 3px; }
.new svg { margin-right: 4px; }
.bar2 .search { flex: none; width: 369px; margin-left: 3px; }
.eye { width: 26px; height: 15px; margin: 0 5px 0 9px; }
.dn { width: 12px; height: 7px; color: #fff; }
h3 { height: 36px; background: #2f2f2f; border-radius: 4px; display: flex; align-items: center; padding: 0 4px 3px 1px; font-size: 20px; color: #e8e8e8; text-shadow: 1px 2px 1px #000; }
h3.gap { margin-top: 3px; }
h3 small { font-size: 18px; font-weight: 400; color: #8b8b8b; text-shadow: none; margin-left: 7px; padding-top: 3px; }
h3 b { margin-left: auto; width: 30px; height: 27px; background: #414141; border-radius: 3px; display: flex; align-items: center; justify-content: center; margin-top: 3px; }
h3 b svg { width: 18px; height: 18px; }
.brow { height: 30px; display: flex; align-items: center; padding-left: 1px; white-space: nowrap; }
.brow .ic { width: 24px; height: 24px; margin-right: 5px; }
.brow.in { padding-left: 30px; }
h4 { height: 27px; display: flex; align-items: center; font-size: 18px; padding-left: 1px; color: #e8e8e8; }
.cam { color: #0f78b8; } .spr { color: #16a0f0; }
.aim { height: 33px; padding-bottom: 1px; }
.pill { width: 21px; height: 12px; border-radius: 5px; background: linear-gradient(#a00, #7a0000); margin: 2px 5px 0 2px; box-shadow: 0 1px 1px #111; }
.lid { margin-left: auto; margin-right: 6px; width: 25px; height: 24px; background: #6c6c6c; border-radius: 3px; }
.lid svg { width: 25px; height: 24px; }

/* toolbar */
.toolbar { height: 94px; background: linear-gradient(135deg, #a08422 0 10px, #3e3e3e 11px); display: flex; color: #e2e2e2; }
.tb { display: flex; flex-direction: column; align-items: center; padding-top: 5px; line-height: 24px; text-shadow: 1px 2px 1px #000; white-space: nowrap; }
.tb svg { width: 60px; height: 60px; }
.nudge svg { margin-right: 3px; }
.play svg { margin-right: 10px; }
.tb svg text { text-shadow: none; }
.gearb { fill: #9aaadf; color: #9aaadf; } .gearw { fill: #fff; color: #fff; } .geard { fill: #8297da; color: #8297da; }
.w90 { width: 90px; } .w36 { width: 36px; } .w78 { width: 78px; } .w144 { width: 144px; } .w38 { width: 38px; } .w138 { width: 138px; } .w142 { width: 142px; } .w112 { width: 112px; } .w80 { width: 80px; }
.drop { display: flex; justify-content: center; padding-top: 44px; color: #bdbdbd; }
.drop svg { width: 13px; height: 7px; }
.sep { width: 3px; height: 88px; margin: 3px 12px; background: #2d2d2d; }
.filter { padding: 20px 0 0 2px; display: flex; flex-direction: column; }
.frow { display: flex; align-items: center; gap: 9px; }
.select { width: 95px; height: 38px; background: #dcdcdc; border: 1px solid #aaa; border-radius: 2px; color: #0a0a0a; display: flex; align-items: center; gap: 6px; padding-left: 8px; }
.select svg { width: 12px; height: 7px; }
.fm { width: 20px; height: 20px; color: #b0b0b0; }
.filter span { line-height: 26px; padding-left: 18px; padding-top: 1px; }

.tabs { display: flex; margin-top: 8px; gap: 2px; }
.tabs .tab { margin-left: 0; width: 225px; flex: none; }
.tabs .tab:first-child { margin-left: 6px; }
.tabs .dim { background: #2f2f2f; }
.tabs .active { border-top: 2px solid #b59d1c; }
.tabs .active span { padding-bottom: 4px; }
.tabs .tab span { margin-right: 8px; }
.tabs .long span { margin-right: 3px; letter-spacing: -.050px; }
.fn { color: #a9b9ee; }

/* graph */
.graph { position: relative; height: 1491px; border: 3px solid #3e3e3e; overflow: hidden; background: #262626; }
.grid { position: absolute; inset: 0; background:
  linear-gradient(#000, #000) 151px 0 / 1px 100% no-repeat,
  linear-gradient(#000, #000) 0 1181px / 100% 1px no-repeat,
  repeating-linear-gradient(90deg, #141414 0 1px, transparent 1px 192px) 151px 0 / 192px 100%,
  repeating-linear-gradient(#141414 0 1px, transparent 1px 192px) 0 29px / 100% 192px,
  repeating-linear-gradient(90deg, #343434 0 1px, transparent 1px 24px) 7px 0 / 24px 100%,
  repeating-linear-gradient(#343434 0 1px, transparent 1px 24px) 0 5px / 100% 24px; }
.grid::after { content: ""; position: absolute; inset: 0; box-shadow: inset 0 0 110px rgba(0,0,0,.5); }
.canvas { position: absolute; left: -585px; top: -210px; width: 2900px; height: 1700px; }
.wires { position: absolute; inset: 0; width: 2900px; height: 1700px; fill: none; stroke-width: 1.700; }
.crumbs { position: absolute; left: 0; top: 0; right: 0; height: 63px; background: rgba(0,0,0,.58); display: flex; align-items: center; font-size: 28px; color: #8d8d8d; padding: 0 8px 2px 11px; }
.star { width: 30px; height: 30px; }
.bar1 { width: 1px; height: 54px; background: #888; margin: 0 17px 0 9px; }
.bar1.two { margin: 0 16px 0 23px; }
.nav { width: 27px; height: 34px; }
.fw { margin-left: 36px; }
.gi { width: 37px; height: 30px; margin-right: 19px; }
.chev { width: 14px; height: 24px; margin: 0 14px 0 14px; }
.crumbs span { letter-spacing: -.050px; }
.crumbs strong { margin-left: auto; color: #323232; padding-bottom: 8px; }
.mark { position: absolute; right: 14px; top: 1357px; line-height: 114px; font-size: 97px; font-weight: bold; color: rgba(255,255,255,.18); transform: scaleX(.862); transform-origin: right; }

.comment { position: absolute; background: rgba(255,255,255,.3); border: 2px solid rgba(255,255,255,.06); box-shadow: 0 3px 8px rgba(0,0,0,.6), inset 0 0 14px rgba(0,0,0,.12); }
.comment h5 { height: 28px; background: #a9a9a9; border-top: 1px solid #c4c4c4; font-size: 18px; line-height: 30px; padding-left: 7px; color: #f0f0f0; text-shadow: 1px 2px 1px #222; }
.grip { position: absolute; right: 0; bottom: 0; width: 12px; height: 10px; }
.c-move { left: 725px; top: 348px; width: 985px; height: 542px; }
.c-turn { left: 725px; top: 900px; width: 744px; height: 379px; }

.node { position: absolute; background: linear-gradient(#262826, #1a1c19 40%); border: 1px solid #0c0c0c; border-radius: 4px; box-shadow: 0 3px 5px rgba(0,0,0,.6); font-size: 9px; color: #e2e2e2; white-space: nowrap; }
.node header { height: 17px; display: flex; align-items: center; font-weight: bold; font-size: 10px; color: #f6f6f6; padding: 1px 3px 0 7px; border-radius: 3px 3px 0 0; text-shadow: 0 1px 1px #000; box-shadow: inset 0 1px 0 rgba(255,255,255,.25); }
.node header svg { width: 11px; height: 11px; margin-right: 4px; color: #f0f0f0; }
.tall header { height: 30px; align-items: flex-start; padding: 3px 3px 0 8px; }
.tall header svg, .green header svg { margin-right: 2px; }
.tall header span { display: flex; flex-direction: column; line-height: 13px; }
.node em { font-style: italic; font-weight: 400; font-size: 9px; color: #a3b08c; text-shadow: none; }
.node header i { margin-left: auto; width: 8px; height: 8px; border: 2px solid #f33; background: #400; border-radius: 1px; }
.red header { background: linear-gradient(100deg, #94201f 0 45%, #6e2222 70%, #474343); }
.blue header { background: radial-gradient(ellipse at 45% 45%, rgba(0,10,20,.42), transparent 45%), linear-gradient(100deg, #4a7fa3 0, #3d6d8f 50%, #2c3a44 95%); }
.green header { background: radial-gradient(ellipse at 45% 80%, rgba(0,15,0,.4), transparent 40%), linear-gradient(100deg, #5c8e5e 0, #4f7a50 50%, #484d48 95%); }
.grey header { background: linear-gradient(100deg, #8a8a8a, #555 50%, #777 75%, #444); }
.node.blue header svg { color: #8fd4ff; } .node.green header svg { color: #b4e6b0; }
.pins { display: flex; justify-content: space-between; padding: 0 9px 0 8px; }
.node p { display: flex; align-items: center; gap: 4px; }
.r p { justify-content: flex-end; }
.node p svg, .n-aim svg { width: 11px; height: 8px; }
.node p svg.e { width: 9px; height: 10px; }
.node u { text-decoration: none; border: 1px solid #bbb; height: 14px; line-height: 12px; padding: 0 3px; }
.node s { width: 12px; height: 12px; border: 2px solid #ccc; border-radius: 3px; background: #333; margin-left: 1px; }
.p26 { height: 25px; padding-top: 1px; } .p20 { height: 20px; } .p21 { height: 21px; } .p23 { height: 22px; } .p24 { height: 24px; } .p25 { height: 25px; } .p27 { height: 27px; } .p15 { height: 16px; }
.g { color: #97ff3a; } .y { color: #fbc42a; } .b { color: #9aa9f8; } .c { color: #0d86c8; } .d { color: #8c0000; }
.n-fwd { left: 1265px; top: 432px; width: 158px; height: 64px; }
.n-add1 { left: 1529px; top: 384px; width: 142px; height: 144px; }
.n-gfv { left: 1337px; top: 552px; width: 145px; height: 43px; }
.n-grv { left: 1337px; top: 648px; width: 145px; height: 43px; }
.n-add2 { left: 1517px; top: 708px; width: 142px; height: 144px; }
.n-right { left: 1265px; top: 744px; width: 144px; height: 64px; }
.n-gcr { left: 761px; top: 552px; width: 170px; height: 59px; }
.n-brk { left: 965px; top: 564px; width: 138px; height: 83px; }
.n-mk { left: 1133px; top: 552px; width: 176px; height: 89px; }
.n-br { left: 1013px; top: 936px; width: 127px; height: 65px; }
.n-look { left: 761px; top: 1032px; width: 131px; height: 64px; }
.n-pitch { left: 1265px; top: 996px; width: 165px; height: 100px; }
.n-turn { left: 773px; top: 1152px; width: 115px; height: 64px; }
.n-yaw { left: 989px; top: 1140px; width: 160px; height: 100px; }
.n-begin { left: 737px; top: 1393px; width: 120px; height: 43px; }
.n-over { left: 737px; top: 1549px; width: 160px; height: 63px; }
.n-aim { left: 989px; top: 1008px; width: 98px; height: 26px; border-radius: 11px; display: flex; align-items: center; justify-content: flex-end; gap: 4px; padding: 2px 10px 0 0; background: radial-gradient(ellipse at 40% 30%, #7a3a3a, transparent 45%), linear-gradient(#777, #444 45%, #2c2c2c); }
.off { opacity: .6; background: #181818; }
.off header { background: linear-gradient(100deg, #6a2020 0 30%, #4a1e1e 60%, #2b2727); color: #b5aaaa; box-shadow: none; padding-top: 0; }
.node.off header svg { color: #b5aaaa; }
.off .p26 { height: 24px; padding-top: 0; }

.bubble { position: absolute; left: 737px; width: 428px; height: 64px; border-radius: 6px; background: rgba(255,255,255,.46); border: 1px solid #aaa; border-width: 1px 1px 2px; color: #2c2c2c; font-size: 20px; line-height: 23.400px; letter-spacing: -.060px; padding: 8px 4px 0 13px; display: flex; justify-content: space-between; }
.bubble div { display: flex; flex-direction: column; gap: 4px; margin-top: -3px; }
.bubble svg { width: 14px; height: 14px; }
.bubble svg + svg { height: 12px; }
.bubble::after { content: ""; position: absolute; left: 12px; top: 62px; border: 6px solid transparent; border-top: 10px solid #8c8c8c; border-bottom: 0; }
.b1 { top: 1316px; } .b2 { top: 1472px; }

/* compiler results */
.results { margin-top: 9px; }
.output { height: 348px; padding: 9px 9px 0; }
.log { height: 283px; background: #222; border-radius: 2px; padding: 6px 0 0 14px; display: flex; align-items: flex-start; gap: 20px; }
.log i { width: 6px; height: 6px; border-radius: 50%; background: #6fbdf2; margin-top: 10px; }
.log code { font: 18px/24px "DejaVu Sans Mono", monospace; letter-spacing: .150px; color: #969696; }
.clear { text-align: right; padding: 13px 9px 0 0; line-height: 26px; }
.details { height: 1982px; }

/* taskbar */
.taskbar { height: 72px; border-top: 2px solid rgba(255,255,255,.16); background: linear-gradient(90deg, #1d4a5e 0, #20506a 300px, #24485c 570px, #2e4444 740px, #3a3b38 1020px, #555a45 1250px, #52573f 1480px, #484a45 1650px, #55584d 1850px, #6f6c4a 2000px, #7c7850 2130px, #6c6d50 2260px, #474a4c 2390px, #2e3f5c 2460px, #2f4260 2750px, #2d3560 3050px, #2c3260 3190px, #2a4042 3260px, #26363f 3420px, #25344c 3560px, #283358); display: flex; justify-content: flex-end; position: relative; }
.apps { position: absolute; left: 1693px; top: 4px; display: flex; gap: 6px; }
.app { width: 60px; height: 60px; border-radius: 6px; display: flex; justify-content: center; padding-top: 12px; position: relative; }
.app svg { width: 36px; height: 36px; }
.app.run::after, .app.sel::after { content: ""; position: absolute; left: 26px; top: 54px; width: 9px; height: 5px; border-radius: 3px; background: #b9b9b0; }
.app.sel::after { left: 18px; width: 24px; background: #4cc2ff; }
.app.sel { background: rgba(255,255,255,.1); border: 1px solid rgba(255,255,255,.1); }
.badge { position: absolute; left: 34px; top: 7px; width: 21px; height: 21px; border: 6px solid #ee5558; border-radius: 50%; background: #fff; }
.tray { display: flex; align-items: center; padding: 0 29px 2px 0; }
.up { width: 18px; height: 10px; } .net { width: 25px; height: 25px; margin-left: 21px; } .vol { width: 25px; height: 22px; margin: 0 24px 0 11px; }
.clock { font: 17px/24px "Open Sans", sans-serif; color: #fff; text-align: right; }
```
